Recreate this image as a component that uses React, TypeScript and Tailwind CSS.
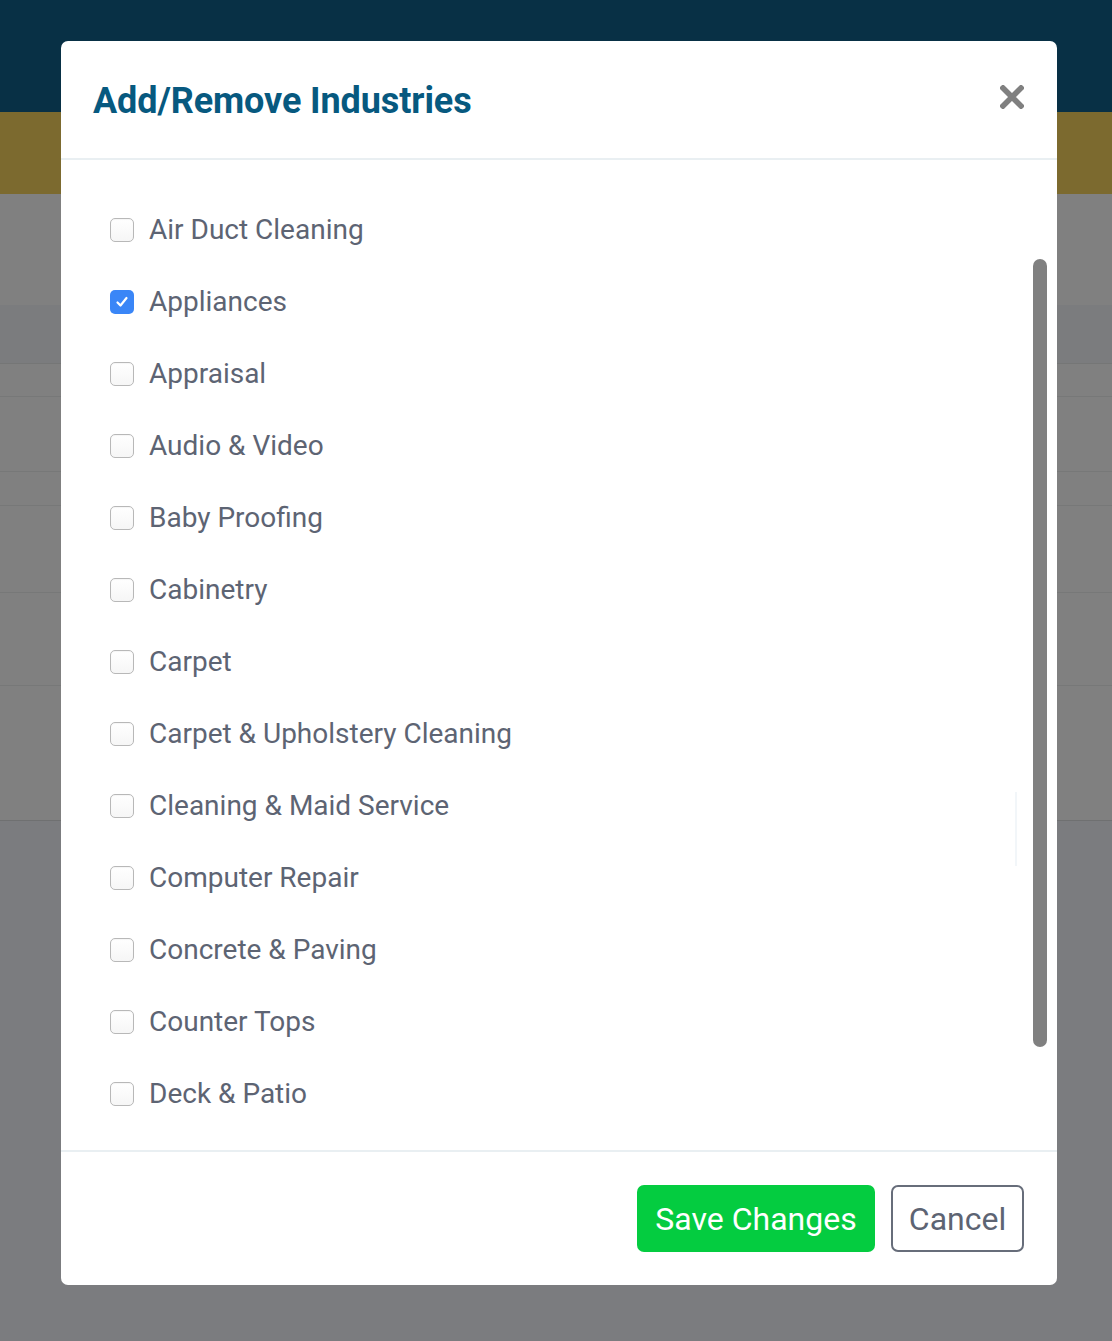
import React from "react";

const items = [
  { label: "Air Duct Cleaning", checked: false },
  { label: "Appliances", checked: true },
  { label: "Appraisal", checked: false },
  { label: "Audio & Video", checked: false },
  { label: "Baby Proofing", checked: false },
  { label: "Cabinetry", checked: false },
  { label: "Carpet", checked: false },
  { label: "Carpet & Upholstery Cleaning", checked: false },
  { label: "Cleaning & Maid Service", checked: false },
  { label: "Computer Repair", checked: false },
  { label: "Concrete & Paving", checked: false },
  { label: "Counter Tops", checked: false },
  { label: "Deck & Patio", checked: false },
];

function Box({ checked }: { checked: boolean }) {
  if (checked) {
    return (
      <span className="flex h-[24px] w-[24px] shrink-0 items-center justify-center rounded-[5px] bg-[#3a86f7]">
        <svg width="16" height="16" viewBox="0 0 16 16" fill="none">
          <path d="M3.5 8.5 L6.5 11.5 L12.5 4" stroke="white" strokeWidth="2.2" strokeLinecap="round" strokeLinejoin="round" />
        </svg>
      </span>
    );
  }
  return (
    <span className="h-[24px] w-[24px] shrink-0 rounded-[5px] border border-[#b8b8b8] bg-gradient-to-b from-white to-[#f6f6f6] shadow-[inset_0_1px_1px_rgba(0,0,0,0.04)]" />
  );
}

export default function App() {
  return (
    <div className="relative h-[1341px] w-[1112px] overflow-hidden bg-[#7b7c7f] font-['Roboto',sans-serif]">
      {/* dimmed page behind the dialog */}
      <div className="flex flex-col">
        <div className="h-[112px] bg-[#083045]" />
        <div className="h-[82px] bg-[#7c6a2f]" />
        <div className="h-[111px] bg-[#808080]" />
        <div className="h-[59px] border-b border-[#757676] bg-[#7b7c7e]" />
        <div className="h-[33px] border-b border-[#777878] bg-[#808080]" />
        <div className="h-[75px] border-b border-[#777878] bg-[#808080]" />
        <div className="h-[34px] border-b border-[#777878] bg-[#808080]" />
        <div className="h-[87px] border-b border-[#777878] bg-[#808080]" />
        <div className="h-[93px] border-b border-[#777878] bg-[#808080]" />
        <div className="h-[135px] border-b border-[#6f7071] bg-[#808080]" />
      </div>

      {/* dialog */}
      <div className="absolute left-[61px] top-[41px] flex h-[1244px] w-[996px] flex-col overflow-hidden rounded-[7px] bg-white">
        <div className="flex h-[119px] shrink-0 items-center justify-between border-b-2 border-[#e9eff2] pl-[32px] pr-[33px]">
          <h2 className="mt-[2px] text-[36px] font-bold leading-none tracking-[-0.1px] text-[#07597f]">
            Add/Remove Industries
          </h2>
          <svg width="24" height="24" viewBox="0 0 24 24" className="mt-[-6px]">
            <path d="M3 3 L21 21 M21 3 L3 21" stroke="#808080" strokeWidth="5.5" strokeLinecap="square" />
          </svg>
        </div>

        <div className="relative h-[990px] shrink-0">
          <div className="flex flex-col pl-[49px] pt-[34px]">
            {items.map((it) => (
              <label key={it.label} className="flex h-[72px] items-center gap-[15px]">
                <Box checked={it.checked} />
                <span className="text-[28px] leading-none text-[#5d6473]">{it.label}</span>
              </label>
            ))}
          </div>
          <div className="absolute right-[10px] top-[99px] h-[788px] w-[14px] rounded-full bg-[#808080]" />
          <div className="absolute right-[40px] top-[632px] h-[74px] w-[2px] bg-[#f2f6f9]" />
        </div>

        <div className="flex flex-1 items-center justify-end gap-[16px] border-t-2 border-[#e9eff2] pr-[33px]">
          <button className="flex h-[67px] w-[238px] items-center justify-center rounded-[7px] bg-[#04cc40] text-[32px] text-white">
            Save Changes
          </button>
          <button className="flex h-[67px] w-[133px] items-center justify-center rounded-[7px] border-2 border-[#676d7a] bg-white text-[32px] text-[#5d6473]">
            Cancel
          </button>
        </div>
      </div>
    </div>
  );
}
